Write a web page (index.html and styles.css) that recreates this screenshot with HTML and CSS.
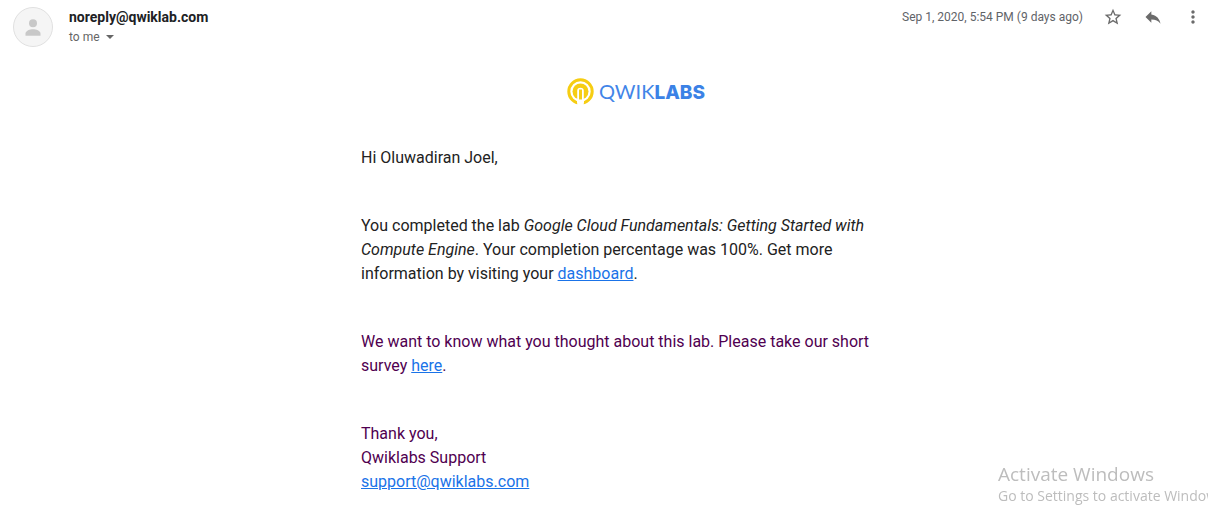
FILE: index.html
```html
<!DOCTYPE html>
<html lang="en">
<head>
<meta charset="utf-8">
<meta name="viewport" content="width=device-width, initial-scale=1">
<title>Qwiklabs message</title>
<link rel="stylesheet" href="styles.css">
</head>
<body>
<article class="message">
  <header class="message-header">
    <svg class="avatar" viewBox="0 0 40 40" aria-hidden="true">
      <circle cx="20" cy="20" r="19.5" fill="#f5f5f5" stroke="#e0e0e0"/>
      <circle cx="20" cy="16.200" r="4" fill="#c8c8c8"/>
      <path d="M12.500 28.800v-2.200c0-2.800 4.500-4.300 7.500-4.300s7.500 1.500 7.500 4.300v2.200z" fill="#c8c8c8"/>
    </svg>
    <div class="sender">
      <h1 class="sender-name">noreply@qwiklab.com</h1>
      <button class="recipients" type="button">to me
        <svg class="caret" viewBox="0 0 8 4" aria-hidden="true"><path d="M0 0h8L4 4z" fill="#666"/></svg>
      </button>
    </div>
    <time class="date" datetime="2020-09-01T17:54">Sep 1, 2020, 5:54 PM (9 days ago)</time>
    <div class="actions">
      <button class="icon-button" type="button" aria-label="Star">
        <svg class="icon" viewBox="0 0 24 24"><path d="M22 9.240l-7.190-.62L12 2 9.190 8.630 2 9.240l5.460 4.730L5.820 21 12 17.270 18.180 21l-1.630-7.030L22 9.240zM12 15.400l-3.760 2.270 1-4.280-3.320-2.880 4.380-.38L12 6.100l1.710 4.040 4.380.38-3.320 2.880 1 4.280L12 15.400z"/></svg>
      </button>
      <button class="icon-button" type="button" aria-label="Reply">
        <svg class="icon" viewBox="0 0 24 24"><path d="M10 9V5l-7 7 7 7v-4.100c5 0 8.500 1.600 11 5.100-1-5-4-10-11-11z"/></svg>
      </button>
      <button class="icon-button" type="button" aria-label="More">
        <svg class="icon" viewBox="0 0 24 24"><path d="M12 8c1.100 0 2-.9 2-2s-.9-2-2-2-2 .9-2 2 .9 2 2 2zm0 2c-1.100 0-2 .9-2 2s.9 2 2 2 2-.9 2-2-.9-2-2-2zm0 6c-1.100 0-2 .9-2 2s.9 2 2 2 2-.9 2-2-.9-2-2-2z"/></svg>
      </button>
    </div>
  </header>

  <div class="message-body">
    <div class="letter">
      <div class="logo">
        <svg class="logo-mark" viewBox="0 0 27 27" aria-hidden="true">
          <circle cx="13.500" cy="13.500" r="11.700" fill="none" stroke="#f6cd12" stroke-width="3"/>
          <circle cx="13.500" cy="13.500" r="8" fill="#f6cd12"/>
          <path d="M10.200 27V13a3.300 3.300 0 0 1 6.600 0v14z" fill="#fff"/>
          <path d="M13.500 11.500v10" fill="none" stroke="#f6cd12" stroke-width="3"/>
          <path d="M10.500 24.800v-3.200M16.500 24.800v-3.200" stroke="#fff" stroke-width="1"/>
        </svg>
        <span class="logo-text">QWIK<b class="logo-bold">LABS</b></span>
      </div>
      <p class="paragraph">Hi Oluwadiran Joel,</p>
      <p class="paragraph">You completed the lab <em>Google Cloud Fundamentals: Getting Started with Compute Engine</em>. Your completion percentage was 100%. Get more information by visiting your <a class="link" href="#dashboard">dashboard</a>.</p>
      <p class="paragraph quoted">We want to know what you thought about this lab. Please take our short survey <a class="link" href="#survey">here</a>.</p>
      <p class="paragraph quoted">Thank you,<br>Qwiklabs Support<br><a class="link" href="mailto:support@qwiklabs.com">support@qwiklabs.com</a></p>
    </div>
  </div>
</article>

<aside class="watermark">
  <div class="watermark-title">Activate Windows</div>
  <div class="watermark-text">Go to Settings to activate Windows.</div>
</aside>
</body>
</html>
```

FILE: styles.css
```css
* {
  box-sizing: border-box;
}

body {
  margin: 0;
  background: #fff;
  color: #222;
  font-family: Roboto, "Liberation Sans", sans-serif;
}

button {
  padding: 0;
  border: 0;
  background: none;
  font: inherit;
  cursor: pointer;
}

.message-header {
  display: flex;
  align-items: flex-start;
  padding: 7px 5px 0 13px;
}

.avatar {
  flex: none;
  width: 40px;
  height: 40px;
}

.sender {
  flex: 1;
  margin-left: 16px;
}

.sender-name {
  margin: 0;
  color: #202124;
  font-size: 14px;
  font-weight: 700;
  line-height: 20px;
}

.recipients {
  display: flex;
  align-items: center;
  gap: 6px;
  color: #666;
  font-size: 12px;
  line-height: 20px;
}

.caret {
  width: 8px;
  height: 4px;
}

.date {
  margin-right: 20px;
  color: #5f6368;
  font-size: 12px;
  line-height: 20px;
}

.actions {
  display: flex;
  gap: 20px;
}

.icon-button {
  width: 20px;
  height: 20px;
}

.icon {
  display: block;
  width: 20px;
  height: 20px;
  fill: #6b6b6b;
}

.message-body {
  padding: 31px 5px 0 69px;
}

.letter {
  max-width: 550px;
  margin: 0 auto;
}

.logo {
  display: flex;
  align-items: center;
  justify-content: center;
  gap: 5px;
  height: 27px;
  margin-bottom: 41px;
}

.logo-mark {
  width: 27px;
  height: 27px;
}

.logo-text {
  color: #4285e8;
  font-family: Lato, sans-serif;
  font-size: 20px;
  font-weight: 400;
  line-height: 26px;
}

.logo-bold {
  color: #3b82e6;
  font-family: Inter, sans-serif;
  font-size: 19px;
  font-weight: 800;
}

.paragraph {
  margin: 0 0 44px;
  font-size: 16px;
  line-height: 24px;
}

.paragraph:last-child {
  margin-bottom: 0;
}

.quoted {
  color: #500050;
}

.link {
  color: #1a73e8;
}

.watermark {
  position: fixed;
  right: 0;
  bottom: 23px;
  width: 210px;
  overflow: hidden;
  color: #bdbdbd;
  font-family: "Open Sans", sans-serif;
  white-space: nowrap;
  pointer-events: none;
}

.watermark-title {
  font-size: 19px;
  line-height: 24px;
}

.watermark-text {
  font-size: 14px;
  line-height: 20px;
}
```
